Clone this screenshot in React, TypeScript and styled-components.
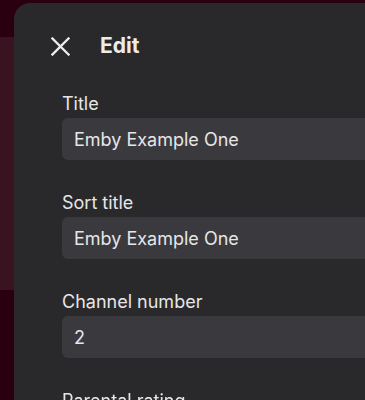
import React from 'react';
import styled, { createGlobalStyle } from 'styled-components';

const GlobalStyle = createGlobalStyle`
  html, body {
    margin: 0;
    padding: 0;
    background: #2a0010;
    font-family: Inter, "Noto Sans", sans-serif;
    overflow: hidden;
  }
`;

const fields = [
  { label: 'Title', value: 'Emby Example One' },
  { label: 'Sort title', value: 'Emby Example One' },
  { label: 'Channel number', value: '2' },
  { label: 'Parental rating', value: '' },
];

export default function App() {
  return (
    <>
      <GlobalStyle />
      <Page>
        <TopBar />
        <Hero />
      </Page>
      <Drawer>
        <Header>
          <CloseButton aria-label="Close">
            <svg width="19" height="19" viewBox="0 0 19 19">
              <path
                d="M1.5 1.5 L17.5 17.5 M17.5 1.5 L1.5 17.5"
                stroke="#ececec"
                strokeWidth="2.3"
                strokeLinecap="square"
              />
            </svg>
          </CloseButton>
          <Heading>Edit</Heading>
        </Header>
        <Form>
          {fields.map((f) => (
            <Field key={f.label}>
              <Label>{f.label}</Label>
              <TextInput readOnly value={f.value} />
            </Field>
          ))}
        </Form>
      </Drawer>
    </>
  );
}

const Page = styled.div`
  display: flex;
  flex-direction: column;
  height: 400px;
`;

const TopBar = styled.div`
  height: 37px;
  background: #2a0010;
`;

const Hero = styled.div`
  height: 253px;
  background: #3a1320;
`;

const Drawer = styled.aside`
  position: fixed;
  top: 3px;
  left: 14px;
  width: 520px;
  bottom: 0;
  background: #29292b;
  border-top-left-radius: 16px;
  padding: 27px 0 0 36px;
  box-sizing: border-box;
  color: #e8e8e8;
`;

const Header = styled.div`
  display: flex;
  align-items: center;
  height: 32px;
  margin-bottom: 30px;
`;

const CloseButton = styled.button`
  display: flex;
  align-items: center;
  justify-content: center;
  width: 21px;
  height: 21px;
  padding: 0;
  margin: 0 29px 0 0;
  border: none;
  background: none;
  cursor: pointer;
`;

const Heading = styled.h2`
  margin: 0;
  font-size: 21px;
  line-height: 32px;
  font-weight: 700;
  color: #ececec;
`;

const Form = styled.div`
  display: flex;
  flex-direction: column;
  gap: 31px;
  padding-left: 12px;
`;

const Field = styled.label`
  display: flex;
  flex-direction: column;
  gap: 2px;
`;

const Label = styled.span`
  font-size: 18px;
  line-height: 24px;
  font-weight: 400;
  color: #e6e6e6;
`;

const TextInput = styled.input`
  height: 42px;
  box-sizing: border-box;
  width: 100%;
  border: none;
  border-radius: 6px;
  background: #3a393e;
  padding: 0 12px;
  font-family: Inter, "Noto Sans", sans-serif;
  font-size: 18px;
  color: #e6e6e6;
  outline: none;
`;
